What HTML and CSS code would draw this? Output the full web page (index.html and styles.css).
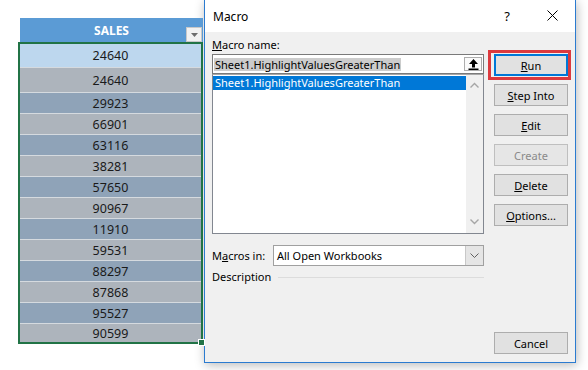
FILE: index.html
```html
<!DOCTYPE html>
<html lang="en">
<head>
    <meta charset="UTF-8">
    <title>Macro</title>
    <link rel="stylesheet" href="styles.css">
</head>
<body>
    <div class="sheet">
        <div class="sheet-head">
            <span class="head-text">SALES</span>
            <span class="filter">
                <svg width="7" height="4" viewBox="0 0 7 4"><path d="M0 0h7L3.5 4z" fill="#6d6d6d"/></svg>
            </span>
        </div>
        <div class="sheet-body">
            <div class="cell first">24640</div>
            <div class="cell tall light">24640</div>
            <div class="cell dark">29923</div>
            <div class="cell light">66901</div>
            <div class="cell dark">63116</div>
            <div class="cell light">38281</div>
            <div class="cell dark">57650</div>
            <div class="cell light">90967</div>
            <div class="cell dark">11910</div>
            <div class="cell light">59531</div>
            <div class="cell dark">88297</div>
            <div class="cell light">87868</div>
            <div class="cell dark">95527</div>
            <div class="cell light last">90599</div>
        </div>
        <span class="handle"></span>
    </div>

    <div class="dialog">
        <div class="titlebar">
            <span class="title">Macro</span>
            <span class="help">?</span>
            <span class="close">
                <svg width="11" height="11" viewBox="0 0 11 11"><path d="M0.5 0.5l10 10M10.5 0.5l-10 10" stroke="#000" stroke-width="1"/></svg>
            </span>
        </div>
        <div class="dlg-body">
            <div class="main">
                <div class="label"><u>M</u>acro name:</div>
                <div class="name-box">
                    <span class="name-sel">Sheet1.HighlightValuesGreaterThan</span>
                    <span class="upload">
                        <svg width="11" height="11" viewBox="0 0 11 11">
                            <path d="M5.5 0L10 5H7V8.5H4V5H1z" fill="#000"/>
                            <rect x="0.5" y="9.5" width="10" height="1.5" fill="#000"/>
                        </svg>
                    </span>
                </div>
                <div class="listbox">
                    <div class="items">
                        <div class="item selected">Sheet1.HighlightValuesGreaterThan</div>
                    </div>
                    <div class="scroll">
                        <svg width="9" height="6" viewBox="0 0 9 6"><path d="M0.5 5.5L4.5 1.5L8.5 5.5" fill="none" stroke="#a6a6a6" stroke-width="1.4"/></svg>
                        <svg width="9" height="6" viewBox="0 0 9 6"><path d="M0.5 0.5L4.5 4.5L8.5 0.5" fill="none" stroke="#a6a6a6" stroke-width="1.4"/></svg>
                    </div>
                </div>
                <div class="row-in">
                    <span class="in-label">M<u>a</u>cros in:</span>
                    <div class="select">
                        <span class="select-text">All Open Workbooks</span>
                        <span class="select-btn">
                            <svg width="9" height="5" viewBox="0 0 9 5"><path d="M0.5 0.5L4.5 4.5L8.5 0.5" fill="none" stroke="#606060" stroke-width="1"/></svg>
                        </span>
                    </div>
                </div>
                <div class="row-desc">
                    <span>Description</span>
                    <span class="rule"></span>
                </div>
            </div>
            <div class="buttons">
                <div class="btn run"><u>R</u>un</div>
                <div class="btn"><u>S</u>tep Into</div>
                <div class="btn"><u>E</u>dit</div>
                <div class="btn disabled">Create</div>
                <div class="btn"><u>D</u>elete</div>
                <div class="btn"><u>O</u>ptions...</div>
                <div class="btn cancel">Cancel</div>
            </div>
        </div>
    </div>
</body>
</html>
```

FILE: styles.css
```css
body {
    margin: 0;
    height: 370px;
    overflow: hidden;
    display: flex;
    align-items: flex-start;
    background-color: #FFFFFF;
    font-family: "Noto Sans", sans-serif;
}

/* spreadsheet */
.sheet {
    position: relative;
    width: 185px;
    margin: 18px 0 0 18px;
}

.sheet-head {
    height: 24px;
    margin-left: 2px;
    background-color: #5B9BD5;
    display: flex;
    align-items: center;
    justify-content: center;
    position: relative;
}

.head-text {
    color: #FFFFFF;
    font-weight: bold;
    font-size: 12px;
}

.filter {
    position: absolute;
    right: 1px;
    top: 9px;
    width: 14px;
    height: 13px;
    background-color: #F2F2F2;
    border: 1px solid #C8C8C8;
    display: flex;
    align-items: center;
    justify-content: center;
}

.sheet-body {
    border: 2px solid #217346;
}

.cell {
    height: 21px;
    box-sizing: border-box;
    border-bottom: 1px solid #D5DADF;
    display: flex;
    align-items: center;
    justify-content: center;
    font-size: 12.5px;
    color: #1A1A1A;
}

.cell.first {
    height: 24px;
    background-color: #BDD7EE;
}

.cell.tall {
    height: 25px;
}

.cell.light {
    background-color: #ADB4BC;
}

.cell.dark {
    background-color: #8FA3B8;
}

.cell.last {
    height: 18px;
    border-bottom: none;
}

.handle {
    position: absolute;
    right: -2px;
    bottom: -2px;
    width: 5px;
    height: 5px;
    background-color: #217346;
    border: 1px solid #FFFFFF;
}

/* dialog */
.dialog {
    width: 372px;
    height: 363px;
    box-sizing: border-box;
    margin-left: 1px;
    border: 1px solid #2B7BD0;
    border-top: none;
    background-color: #F0F0F0;
    box-shadow: 1px 2px 10px rgba(0, 0, 0, 0.28);
    display: flex;
    flex-direction: column;
    font-size: 11px;
    color: #000000;
}

.titlebar {
    height: 32px;
    flex: none;
    background-color: #FFFFFF;
    display: flex;
    align-items: center;
    padding-left: 8px;
}

.title {
    font-size: 12px;
    flex: 1;
}

.help {
    font-size: 13px;
    margin-right: 37px;
}

.close {
    display: flex;
    margin-right: 17px;
    margin-top: -1px;
}

.dlg-body {
    flex: 1;
    display: flex;
    padding: 0 7px 8px 7px;
}

.main {
    width: 272px;
    display: flex;
    flex-direction: column;
}

.label {
    margin-top: 5px;
    line-height: 16px;
}

.name-box {
    margin-top: 1px;
    height: 20px;
    box-sizing: border-box;
    border: 1px solid #7A7A7A;
    background-color: #FFFFFF;
    display: flex;
    align-items: center;
    padding-left: 1px;
}

.name-sel {
    background-color: #CCCCCC;
    line-height: 13px;
    padding: 0 1px;
    flex: none;
}

.upload {
    margin-left: auto;
    margin-right: 1px;
    width: 18px;
    height: 14px;
    box-sizing: border-box;
    border: 1px solid #ADADAD;
    background-color: #FAFAFA;
    display: flex;
    align-items: center;
    justify-content: center;
}

.listbox {
    height: 160px;
    box-sizing: border-box;
    border: 1px solid #828790;
    border-top: 1px solid #A8A8A8;
    background-color: #FFFFFF;
    display: flex;
}

.items {
    flex: 1;
    padding: 1px 0 0 0;
}

.item {
    height: 14px;
    line-height: 14px;
    padding-left: 2px;
}

.item.selected {
    background-color: #0078D7;
    color: #FFFFFF;
}

.scroll {
    width: 17px;
    background-color: #F0F0F0;
    display: flex;
    flex-direction: column;
    justify-content: space-between;
    align-items: center;
    padding: 7px 0 8px 0;
}

.row-in {
    margin-top: 11px;
    display: flex;
    align-items: center;
}

.in-label {
    width: 61px;
}

.select {
    flex: 1;
    height: 21px;
    box-sizing: border-box;
    border: 1px solid #A0A0A0;
    background-color: #FFFFFF;
    display: flex;
    align-items: center;
}

.select-text {
    flex: 1;
    padding-left: 3px;
}

.select-btn {
    width: 17px;
    height: 100%;
    background-color: #E5E5E5;
    border-left: 1px solid #C8C8C8;
    display: flex;
    align-items: center;
    justify-content: center;
}

.row-desc {
    margin-top: 3px;
    line-height: 16px;
    display: flex;
    align-items: center;
}

.rule {
    flex: 1;
    height: 1px;
    margin-left: 7px;
    background-color: #DCDCDC;
}

.buttons {
    width: 74px;
    margin-left: 10px;
    display: flex;
    flex-direction: column;
    gap: 8px;
}

.btn {
    height: 22px;
    box-sizing: border-box;
    border: 1px solid #ADADAD;
    background-color: #E1E1E1;
    display: flex;
    align-items: center;
    justify-content: center;
}

.btn.run {
    margin-top: 22px;
    border-color: #0078D7;
    box-shadow: inset 0 0 0 1px #0078D7;
    position: relative;
}

.btn.run::after {
    content: "";
    position: absolute;
    top: -5px;
    bottom: -5px;
    left: -7px;
    right: -4px;
    border: 3px solid #DC3A3E;
}

.btn.disabled {
    color: #8A8A8A;
    border-color: #BFBFBF;
    background-color: #E6E6E6;
}

.btn.cancel {
    margin-top: auto;
}
```
